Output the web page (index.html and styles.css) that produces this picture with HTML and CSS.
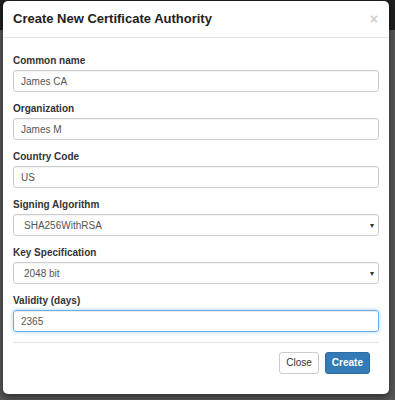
FILE: index.html
```html
<!DOCTYPE html>
<html>
<head>
<meta charset="utf-8">
<link rel="stylesheet" href="styles.css">
</head>
<body>
<div class="page">
  <div class="navbar"></div>
  <div class="content"></div>
</div>
<div class="modal">
  <div class="modal-header">
    <h4 class="modal-title">Create New Certificate Authority</h4>
    <span class="close">&times;</span>
  </div>
  <div class="modal-body">
    <div class="group">
      <label class="label">Common name</label>
      <div class="input">James CA</div>
    </div>
    <div class="group">
      <label class="label">Organization</label>
      <div class="input">James M</div>
    </div>
    <div class="group">
      <label class="label">Country Code</label>
      <div class="input">US</div>
    </div>
    <div class="group">
      <label class="label">Signing Algorithm</label>
      <div class="input select"><span>SHA256WithRSA</span><span class="caret">&#9662;</span></div>
    </div>
    <div class="group">
      <label class="label">Key Specification</label>
      <div class="input select"><span>2048 bit</span><span class="caret">&#9662;</span></div>
    </div>
    <div class="group">
      <label class="label">Validity (days)</label>
      <div class="input focus">2365</div>
    </div>
  </div>
  <div class="modal-footer">
    <button class="btn btn-default">Close</button>
    <button class="btn btn-primary">Create</button>
  </div>
</div>
</body>
</html>
```
FILE: styles.css
```css
html, body {
  margin: 0;
  padding: 0;
}
body {
  width: 395px;
  height: 400px;
  overflow: hidden;
  font-family: "Liberation Sans", Arial, sans-serif;
  background: #575757;
  position: relative;
}
.page {
  display: flex;
  flex-direction: column;
  height: 400px;
}
.navbar {
  height: 30px;
  background: #1f1f1f;
}
.content {
  flex: 1;
  background: #585858;
}
.modal {
  position: absolute;
  left: 3px;
  top: 1px;
  width: 386px;
  height: 393px;
  background: #fff;
  border-radius: 5px;
  box-shadow: 0 3px 9px rgba(0,0,0,.5);
  display: flex;
  flex-direction: column;
  box-sizing: border-box;
}
.modal-header {
  height: 37px;
  box-sizing: border-box;
  border-bottom: 1px solid #e5e5e5;
  padding: 0 10px;
  display: flex;
  align-items: center;
  justify-content: space-between;
}
.modal-title {
  margin: 0;
  font-size: 13px;
  font-weight: bold;
  color: #222;
  line-height: 16px;
}
.close {
  font-size: 14px;
  font-weight: bold;
  color: #cfcfcf;
  line-height: 16px;
  margin-right: 1px;
}
.modal-body {
  padding: 16px 10px 0;
}
.group {
  display: flex;
  flex-direction: column;
  margin-bottom: 10px;
}
.label {
  font-size: 10px;
  font-weight: bold;
  color: #333;
  line-height: 14px;
  margin-bottom: 2px;
}
.input {
  height: 22px;
  box-sizing: border-box;
  border: 1px solid #ccc;
  border-radius: 3px;
  font-size: 10px;
  color: #555;
  padding: 0 7px;
  display: flex;
  align-items: center;
  box-shadow: inset 0 1px 1px rgba(0,0,0,.05);
}
.select {
  padding: 0 4px 0 10px;
  justify-content: space-between;
}
.caret {
  font-size: 8px;
  color: #333;
}
.focus {
  border-color: #66afe9;
  box-shadow: inset 0 1px 1px rgba(0,0,0,.075), 0 0 4px rgba(102,175,233,.6);
}
.modal-footer {
  border-top: 1px solid #e5e5e5;
  margin: 0 10px;
  padding: 9px 9px 0 0;
  display: flex;
  justify-content: flex-end;
  gap: 6px;
}
.btn {
  height: 22px;
  font-family: "Liberation Sans", Arial, sans-serif;
  font-size: 10px;
  border-radius: 3px;
  border: 1px solid #ccc;
  padding: 0 6px;
  margin: 0;
  line-height: 20px;
}
.btn-default {
  background: #fff;
  color: #333;
}
.btn-primary {
  background: #337ab7;
  border-color: #2e6da4;
  color: #fff;
  font-weight: bold;
}
```
